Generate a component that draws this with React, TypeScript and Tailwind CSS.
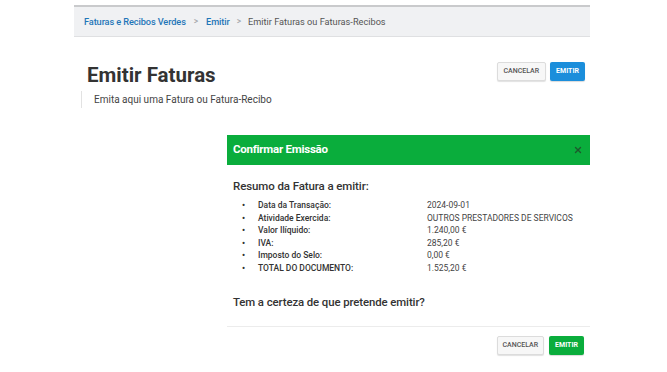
import { X } from 'lucide-react'

const RESUMO = [
  { label: 'Data da Transação:', value: '2024-09-01' },
  { label: 'Atividade Exercida:', value: 'OUTROS PRESTADORES DE SERVICOS' },
  { label: 'Valor Ilíquido:', value: '1.240,00 €' },
  { label: 'IVA:', value: '285,20 €' },
  { label: 'Imposto do Selo:', value: '0,00 €' },
  { label: 'TOTAL DO DOCUMENTO:', value: '1.525,20 €' },
]

export default function App() {
  return (
    <div className="w-[667px] h-[372px] bg-white overflow-hidden text-[#333] font-['Roboto',sans-serif]">
      <div className="ml-[74px] w-[516px] pt-[5px]">
        {/* Breadcrumb */}
        <div className="h-[32px] bg-[#f0f1f3] border-t-2 border-t-[#c9cacc] border-b border-b-[#dfe0e2] flex items-center pl-[10px] text-[9.2px] font-medium tracking-[-0.1px]">
          <span className="text-[#1f76b8]">Faturas e Recibos Verdes</span>
          <span className="text-[#a0a4a8] mx-[8px] text-[8.5px]">&gt;</span>
          <span className="text-[#1f76b8]">Emitir</span>
          <span className="text-[#a0a4a8] mx-[7px] text-[8.5px]">&gt;</span>
          <span className="text-[#555] font-normal tracking-normal">Emitir Faturas ou Faturas-Recibos</span>
        </div>

        {/* Header */}
        <div className="flex justify-between items-start mt-[25px]">
          <h1 className="ml-[13px] mt-[1px] text-[20.5px] leading-[24px] font-bold text-[#333]">Emitir Faturas</h1>
          <div className="flex gap-[4px] mr-[5px]">
            <button className="h-[19px] px-[6px] text-[7px] font-medium text-[#555] bg-[#f7f7f7] border border-[#dcdcdc] rounded-[2px] shadow-[0_1px_1px_rgba(0,0,0,0.12)]">
              CANCELAR
            </button>
            <button className="h-[19px] px-[6px] text-[7px] font-bold text-white bg-[#1b8edb] rounded-[2px] shadow-[0_1px_1px_rgba(0,0,0,0.15)]">
              EMITIR
            </button>
          </div>
        </div>
        <div className="ml-[7px] mt-[4px] border-l border-[#e2e2e2] pl-[12px] h-[17px] flex items-center text-[10px] text-[#444]">
          Emita aqui uma Fatura ou Fatura-Recibo
        </div>

        {/* Modal */}
        <div className="ml-[153px] mt-[27px] w-[363px]">
          <div className="h-[30px] bg-[#0aad3c] flex items-center justify-between pl-[6px] pr-[7px]">
            <span className="text-white text-[11.5px] font-bold tracking-[-0.25px]">Confirmar Emissão</span>
            <X size={10} strokeWidth={3.2} className="text-[#1c5a2c]" />
          </div>
          <div className="px-[6px] pt-[14px]">
            <div className="text-[11.5px] font-medium text-[#333] leading-[14px] tracking-[-0.1px]">Resumo da Fatura a emitir:</div>
            <ul className="mt-[6px] text-[8.5px] leading-[12.5px] text-[#333]">
              {RESUMO.map((r) => (
                <li key={r.label} className="flex">
                  <span className="w-[25px] pl-[9px] font-bold">•</span>
                  <span className="w-[169px] font-medium">{r.label}</span>
                  <span className="font-normal text-[#444]">{r.value}</span>
                </li>
              ))}
            </ul>
            <div className="mt-[21px] text-[11.4px] font-medium leading-[14px] tracking-[-0.1px]">Tem a certeza de que pretende emitir?</div>
          </div>
          <div className="mt-[17px] border-t border-[#ececec] flex justify-end gap-[5px] pt-[9px] pr-[6px]">
            <button className="h-[19px] px-[5px] text-[7px] font-medium text-[#555] bg-[#f7f7f7] border border-[#dcdcdc] rounded-[2px] shadow-[0_1px_1px_rgba(0,0,0,0.12)]">
              CANCELAR
            </button>
            <button className="h-[19px] px-[6px] text-[7px] font-bold text-white bg-[#0aad3c] rounded-[2px] shadow-[0_1px_1px_rgba(0,0,0,0.15)]">
              EMITIR
            </button>
          </div>
        </div>
      </div>
    </div>
  )
}
